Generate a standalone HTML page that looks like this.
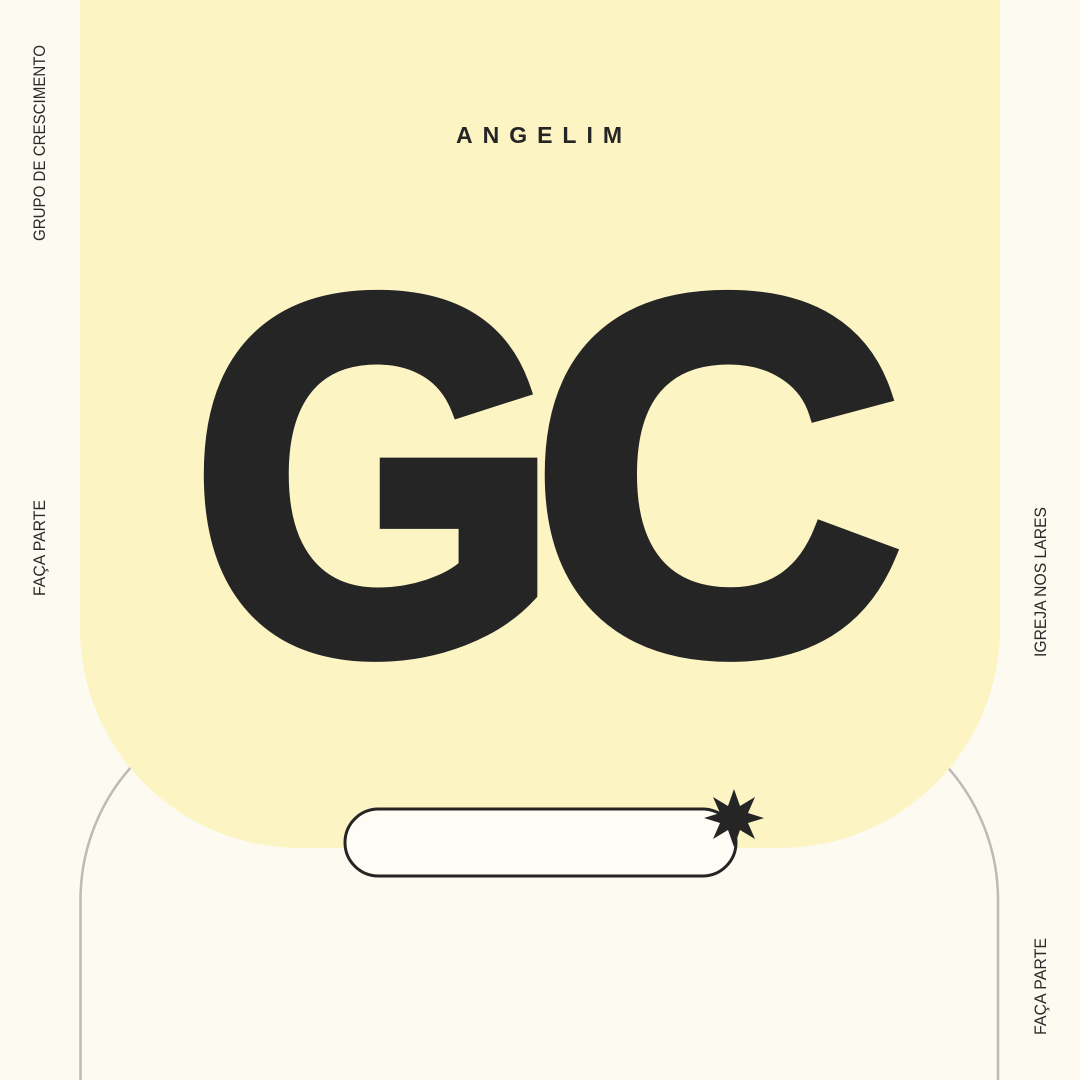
<!DOCTYPE html>
<html><head><meta charset="utf-8"><style>
html,body{margin:0;padding:0;width:1080px;height:1080px;overflow:hidden;background:#fcfaf1}
svg{display:block}
</style></head><body>
<svg width="1080" height="1080" viewBox="0 0 1080 1080" xmlns="http://www.w3.org/2000/svg">
<rect width="1080" height="1080" fill="#fcfaf1"/>
<path d="M80.5 1080 V900 A200 200 0 0 1 280 700 H798 A200 200 0 0 1 998 900 V1080" fill="#fcfaf1" stroke="#bdbbb5" stroke-width="2.5"/>
<path d="M80 0 H1000 V628 A220 220 0 0 1 780 848 H300 A220 220 0 0 1 80 628 Z" fill="#fdf4c3"/>
<text x="456" y="143" font-family="Liberation Sans, sans-serif" font-weight="bold" font-size="23" fill="#252525" textLength="166" lengthAdjust="spacing">ANGELIM</text>
<g font-family="Liberation Sans, sans-serif" font-weight="bold" font-size="500" fill="#252525" stroke="#252525" stroke-width="18" stroke-linejoin="miter">
<text x="193" y="648" textLength="365" lengthAdjust="spacingAndGlyphs">G</text>
<text x="533" y="648" textLength="368" lengthAdjust="spacingAndGlyphs">C</text>
</g>
<rect x="345" y="809" width="391" height="67" rx="33.5" fill="#fefcf5" stroke="#252525" stroke-width="3"/>
<polygon fill="#252525" points="734,789 740,806 755,797 748,813 764,818 748,823 755,839 740,830 734,847 728,830 713,839 720,823 704,818 720,813 713,797 728,806"/>
<g font-family="Liberation Sans, sans-serif" font-size="17" fill="#2a2a2a">
<text transform="translate(45,241) rotate(-90)" textLength="196" lengthAdjust="spacingAndGlyphs">GRUPO DE CRESCIMENTO</text>
<text transform="translate(45,596) rotate(-90)" textLength="96" lengthAdjust="spacingAndGlyphs">FAÇA PARTE</text>
<text transform="translate(1046,657) rotate(-90)" textLength="150" lengthAdjust="spacingAndGlyphs">IGREJA NOS LARES</text>
<text transform="translate(1046,1035) rotate(-90)" textLength="97" lengthAdjust="spacingAndGlyphs">FAÇA PARTE</text>
</g>
</svg>
</body></html>
